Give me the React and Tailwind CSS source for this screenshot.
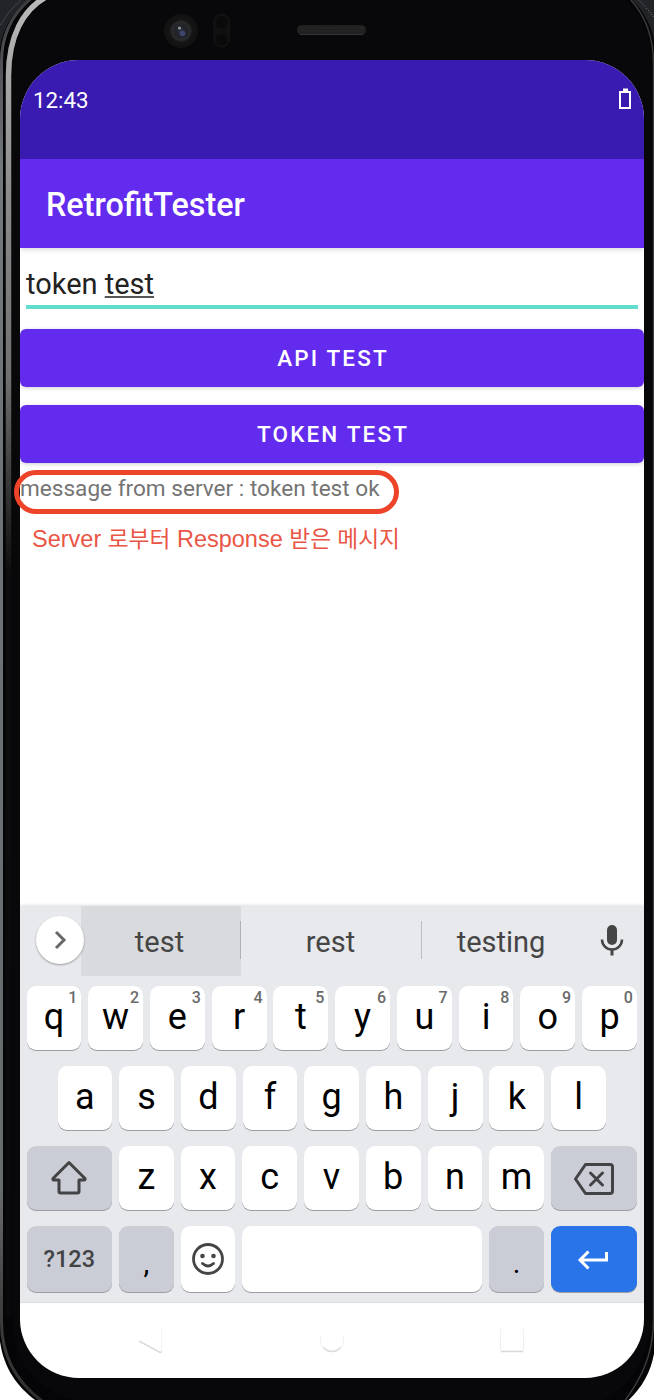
import React from "react";

const rowOne = ["q", "w", "e", "r", "t", "y", "u", "i", "o", "p"];
const rowTwo = ["a", "s", "d", "f", "g", "h", "j", "k", "l"];
const rowThree = ["z", "x", "c", "v", "b", "n", "m"];

const keyBase =
  "relative flex items-center justify-center rounded-[9px] shadow-[0_1px_0.5px_#9c9da1] text-black";

function Letter({ ch, hint }) {
  return (
    <div className={`${keyBase} h-full w-[54.8px] shrink-0 bg-white text-[36px] leading-none`}>
      <span className="-translate-y-px">{ch}</span>
      {hint && (
        <span className="absolute right-[4px] top-[4px] text-[16px] font-medium leading-none text-[#6a6a6a]">
          {hint}
        </span>
      )}
    </div>
  );
}

function DeviceFrame() {
  return (
    <svg className="absolute inset-0" width="654" height="1400" viewBox="0 0 654 1400" fill="none">
      <defs>
        <linearGradient id="backdrop" x1="0" y1="0" x2="0" y2="1400" gradientUnits="userSpaceOnUse">
          <stop offset="0" stopColor="#222428" />
          <stop offset="0.5" stopColor="#222428" />
          <stop offset="0.51" stopColor="#fff" />
        </linearGradient>
        <linearGradient id="rail" x1="0" y1="0" x2="0" y2="1400" gradientUnits="userSpaceOnUse">
          <stop offset="0" stopColor="#b9b9b9" />
          <stop offset="0.14" stopColor="#8b8b8b" />
          <stop offset="0.27" stopColor="#707070" />
          <stop offset="0.34" stopColor="#3c3c3c" />
          <stop offset="0.41" stopColor="#0d0d0e" />
          <stop offset="1" stopColor="#08080a" />
        </linearGradient>
        <linearGradient id="edge" x1="0" y1="0" x2="0" y2="1400" gradientUnits="userSpaceOnUse">
          <stop offset="0" stopColor="#3a3b3e" />
          <stop offset="0.12" stopColor="#74777b" />
          <stop offset="0.85" stopColor="#686b6e" />
          <stop offset="0.93" stopColor="#404040" />
          <stop offset="1" stopColor="#303030" />
        </linearGradient>
        <radialGradient id="lens">
          <stop offset="0" stopColor="#2d3244" />
          <stop offset="0.3" stopColor="#202228" />
          <stop offset="0.55" stopColor="#2a2a2c" />
          <stop offset="0.66" stopColor="#151515" />
          <stop offset="1" stopColor="#111" />
        </radialGradient>
      </defs>
      <path d="M0 0H654V1400H0Z" fill="url(#backdrop)" />
      <path d="M32 -4C12 12 -1 32 -1 60V1326C-1 1366 18 1390 44 1406H622C646 1386 656 1364 656 1330V60C656 30 644 10 628 -4Z" fill="#050507" />
      <path d="M26 -4C14 5 7 14 0 26" stroke="#777" strokeWidth="1" strokeDasharray="1 1.500" />
      <path d="M634 -4C643 3 649 11 655 19" stroke="#777" strokeWidth="1" strokeDasharray="1 1.500" />
      <path d="M34 -4C13 12 1.5 34 1.5 62V1322C1.5 1360 20 1386 46 1404" stroke="url(#edge)" strokeWidth="3" />
      <path d="M50 -5C22 8 8.5 38 8.5 76V1318" stroke="url(#rail)" strokeWidth="5.5" />
      <path d="M56 -4C24 10 12 40 12 80V1312C12 1360 32 1390 80 1402H600C636 1384 651 1352 651 1310V62C651 34 640 10 620 -4Z" fill="#08080a" />
      <path d="M628 -3C645 14 653.500 36 653.500 64V1320C653.500 1356 640 1380 624 1402" stroke="#3a3a3b" strokeWidth="1.5" />
      <circle cx="181" cy="31" r="17" fill="url(#lens)" />
      <circle cx="182.5" cy="33.5" r="2.8" fill="#3d476e" />
      <circle cx="179.5" cy="28" r="1.600" fill="#959595" />
      <rect x="214" y="14" width="15.500" height="33" rx="7.5" fill="#101010" stroke="#151515" />
      <circle cx="221.500" cy="22" r="6" fill="#0a0a0a" />
      <circle cx="221.500" cy="40" r="6" fill="#0a0a0a" />
      <rect x="297" y="25" width="69" height="10" rx="4.500" fill="#202020" />
      <path d="M300 28H364M299 31H364" stroke="#2d2d2d" strokeWidth="1.500" strokeDasharray="1 1.500" />
      <path d="M300 34.500H363" stroke="#333" />
    </svg>
  );
}

export default function App() {
  return (
    <div className="relative h-[1400px] w-[654px] overflow-hidden bg-black font-['Roboto','Noto_Sans_CJK_KR',sans-serif]">
      <DeviceFrame />
      <div className="relative px-5 pt-[60px]">
        <main className="flex h-[1318px] w-[624px] flex-col overflow-hidden rounded-[59px] bg-white">
          <header className="shrink-0">
            <div className="flex h-[99px] items-start justify-between bg-[#391bb1] pl-[13px] pr-[13px] text-white">
              <span className="mt-[27px] text-[22.3px] leading-[26px]">12:43</span>
              <svg className="mt-[28px]" width="12" height="21" viewBox="0 0 12 21" fill="none">
                <path d="M1 4H11V20H1Z" stroke="white" strokeWidth="2" />
                <path d="M4 0.500H9V3H4Z" fill="white" />
              </svg>
            </div>
            <div className="relative flex h-[89px] items-center bg-[#632bee] pl-[26px] pt-[3px] text-[32.3px] font-medium text-white shadow-[0_1px_6px_rgba(0,0,0,0.18)] [clip-path:inset(0_0_-12px_0)]">
              RetrofitTester
            </div>
          </header>

          <section className="flex h-[658px] shrink-0 flex-col">
            <div className="mx-[6px] mt-[18px] flex h-[43px] shrink-0 items-start border-b-4 border-[#64dccb] text-[29px] leading-[36px] text-[#222]">
              <span className="whitespace-pre">token </span>
              <span className="underline decoration-[#555] decoration-2 underline-offset-[2px]">test</span>
            </div>
            <button className="mt-5 h-[58px] shrink-0 rounded-[6px] bg-[#632bee] pl-[2px] pt-px text-[22.5px] font-medium tracking-[2.15px] text-white shadow-[0_1px_4px_rgba(0,0,0,0.2)]">
              API TEST
            </button>
            <button className="mt-[18px] h-[58px] shrink-0 rounded-[6px] bg-[#632bee] pl-[2px] pt-[2px] text-[22.5px] font-medium tracking-[2.15px] text-white shadow-[0_1px_4px_rgba(0,0,0,0.2)]">
              TOKEN TEST
            </button>
            <p className="mt-[13px] h-[28px] shrink-0 text-[22.6px] leading-[26px] text-[#747474]">
              message from server : token test ok
            </p>
            <p className="ml-[12px] mt-[21px] whitespace-nowrap font-['Liberation_Sans','Noto_Sans_CJK_KR',sans-serif] text-[23.5px] leading-[28px] text-[#ea5546]">
              Server{" "}
              <span className="text-[22.700px]">로부터</span>
              {" "}Response{" "}
              <span className="text-[22.700px]">받은 메시지</span>
            </p>
          </section>

          <section className="flex h-[396px] shrink-0 flex-col bg-[#e8e9ed] shadow-[0_-1px_3px_rgba(0,0,0,0.12)]">
            <div className="flex h-[69px] shrink-0 items-start text-[29px] text-[#454545]">
              <div className="relative z-10 ml-[16px] mt-[10px] flex size-[48px] items-center justify-center rounded-full bg-white shadow-[0_1px_2px_rgba(0,0,0,0.35)]">
                <svg className="translate-x-px" width="14" height="20" viewBox="0 0 14 20" fill="none">
                  <path d="M2 2L10 10L2 18" stroke="#696969" strokeWidth="3" />
                </svg>
              </div>
              <div className="-ml-[3px] flex h-[70px] w-[160px] items-center justify-center bg-[#d9dade] pr-[3px] pt-[3px]">test</div>
              <div className="-ml-px mt-[15px] h-[38px] w-px bg-[#b0b1b5]" />
              <div className="flex h-[70px] w-[180px] items-center justify-center pr-px pt-[3px]">rest</div>
              <div className="mt-[15px] h-[38px] w-px bg-[#bbbcc0]" />
              <div className="flex h-[70px] w-[158px] items-center justify-center pt-[3px]">testing</div>
              <svg className="ml-[20px] mt-[19px]" width="24" height="32" viewBox="0 0 24 32" fill="none">
                <rect x="7" width="10" height="20" rx="5" fill="#454545" />
                <path d="M2 14.500A10 10 0 0 0 22 14.500" stroke="#454545" strokeWidth="2.500" />
                <path d="M12 24V30.500" stroke="#454545" strokeWidth="3" />
              </svg>
            </div>
            <div className="ml-[6.5px] mr-[7px] mt-[10.5px] flex h-[64.5px] shrink-0 justify-between">
              {rowOne.map((ch, i) => <Letter key={ch} ch={ch} hint={String((i + 1) % 10)} />)}
            </div>
            <div className="ml-[37.5px] mr-[38px] mt-[15.5px] flex h-[64.5px] shrink-0 justify-between">
              {rowTwo.map((ch) => <Letter key={ch} ch={ch} />)}
            </div>
            <div className="ml-[6.5px] mr-[7px] mt-[15.5px] flex h-[64.5px] shrink-0 justify-between">
              <div className={`${keyBase} w-[85.500px] bg-[#cbcdd6]`}>
                <svg width="36" height="36" viewBox="0 0 36 36" fill="none">
                  <path d="M18 2.500L34 18.500Q34.500 20 33 20H28V31.500Q28 33 26.500 33H9.500Q8 33 8 31.500V20H3Q1.500 20 2 18.500Z" stroke="#424344" strokeWidth="3" strokeLinejoin="round" />
                </svg>
              </div>
              {rowThree.map((ch) => <Letter key={ch} ch={ch} />)}
              <div className={`${keyBase} w-[86px] bg-[#cbcdd6]`}>
                <svg className="translate-y-px" width="40" height="32" viewBox="0 0 40 32" fill="none">
                  <path d="M11.500 1.500H36Q38.500 1.500 38.500 4V28Q38.500 30.500 36 30.500H11.500L1.500 16Z" stroke="#424344" strokeWidth="3" strokeLinejoin="round" />
                  <path d="M16.500 10L28.500 22M28.500 10L16.500 22" stroke="#424344" strokeWidth="3" strokeLinecap="round" />
                </svg>
              </div>
            </div>
            <div className="ml-[6.5px] mr-[7px] mt-[15.5px] flex h-[66px] shrink-0 justify-between">
              <div className={`${keyBase} w-[85.500px] bg-[#cbcdd6] pt-[3px] text-[23.5px] font-medium !text-[#424344]`}>?123</div>
              <div className={`${keyBase} w-[54.800px] bg-[#cbcdd6] pt-[10px] text-[29px]`}>,</div>
              <div className={`${keyBase} w-[54.800px] bg-white`}>
                <svg width="32" height="32" viewBox="0 0 32 32" fill="none">
                  <circle cx="16" cy="16" r="14.500" stroke="#454545" strokeWidth="2.800" />
                  <circle cx="10.500" cy="13" r="2.300" fill="#454545" />
                  <circle cx="21.500" cy="13" r="2.300" fill="#454545" />
                  <path d="M10.500 20.500Q16 25.500 21.500 20.500" stroke="#454545" strokeWidth="2.800" strokeLinecap="round" />
                </svg>
              </div>
              <div className={`${keyBase} w-[240px] bg-white`} />
              <div className={`${keyBase} w-[54.800px] bg-[#cbcdd6] pt-[10px] text-[29px]`}>.</div>
              <div className={`${keyBase} w-[86px] bg-[#2874e8]`}>
                <svg className="-translate-x-px translate-y-px" width="32" height="20" viewBox="0 0 32 20" fill="none">
                  <path d="M11.500 1.500L3 10L11.500 18.500M3 10H29.500V2" stroke="white" strokeWidth="3" />
                </svg>
              </div>
            </div>
          </section>

          <nav className="flex h-[76px] shrink-0 items-start border-t border-[#dddee1] pl-[118px] pt-[24px]">
            <svg width="25" height="27" viewBox="0 0 25 27" fill="none">
              <path d="M23.500 26V2" stroke="#f4f4f4" />
              <path d="M1 14L22 25.500L23.500 25" stroke="#dadada" strokeWidth="1.500" />
            </svg>
            <svg className="ml-[156px]" width="26" height="28" viewBox="0 0 26 28" fill="none">
              <path d="M1.500 9V13A11.500 11.500 0 0 0 24.500 13V9" stroke="#f2f2f2" />
              <path d="M4.300 20.600A11.500 11.500 0 0 0 21.700 20.600" stroke="#dadada" strokeWidth="1.500" />
            </svg>
            <svg className="ml-[154px]" width="26" height="28" viewBox="0 0 26 28" fill="none">
              <path d="M1.500 2V24H24.500V2" stroke="#f0f0f0" />
              <path d="M2 24.500H24" stroke="#dadada" strokeWidth="1.500" />
            </svg>
          </nav>
        </main>
      </div>
      <div className="absolute left-[14px] top-[470px] h-[44px] w-[385px] rounded-[22px] border-[5px] border-[#ed4328]" />
    </div>
  );
}
